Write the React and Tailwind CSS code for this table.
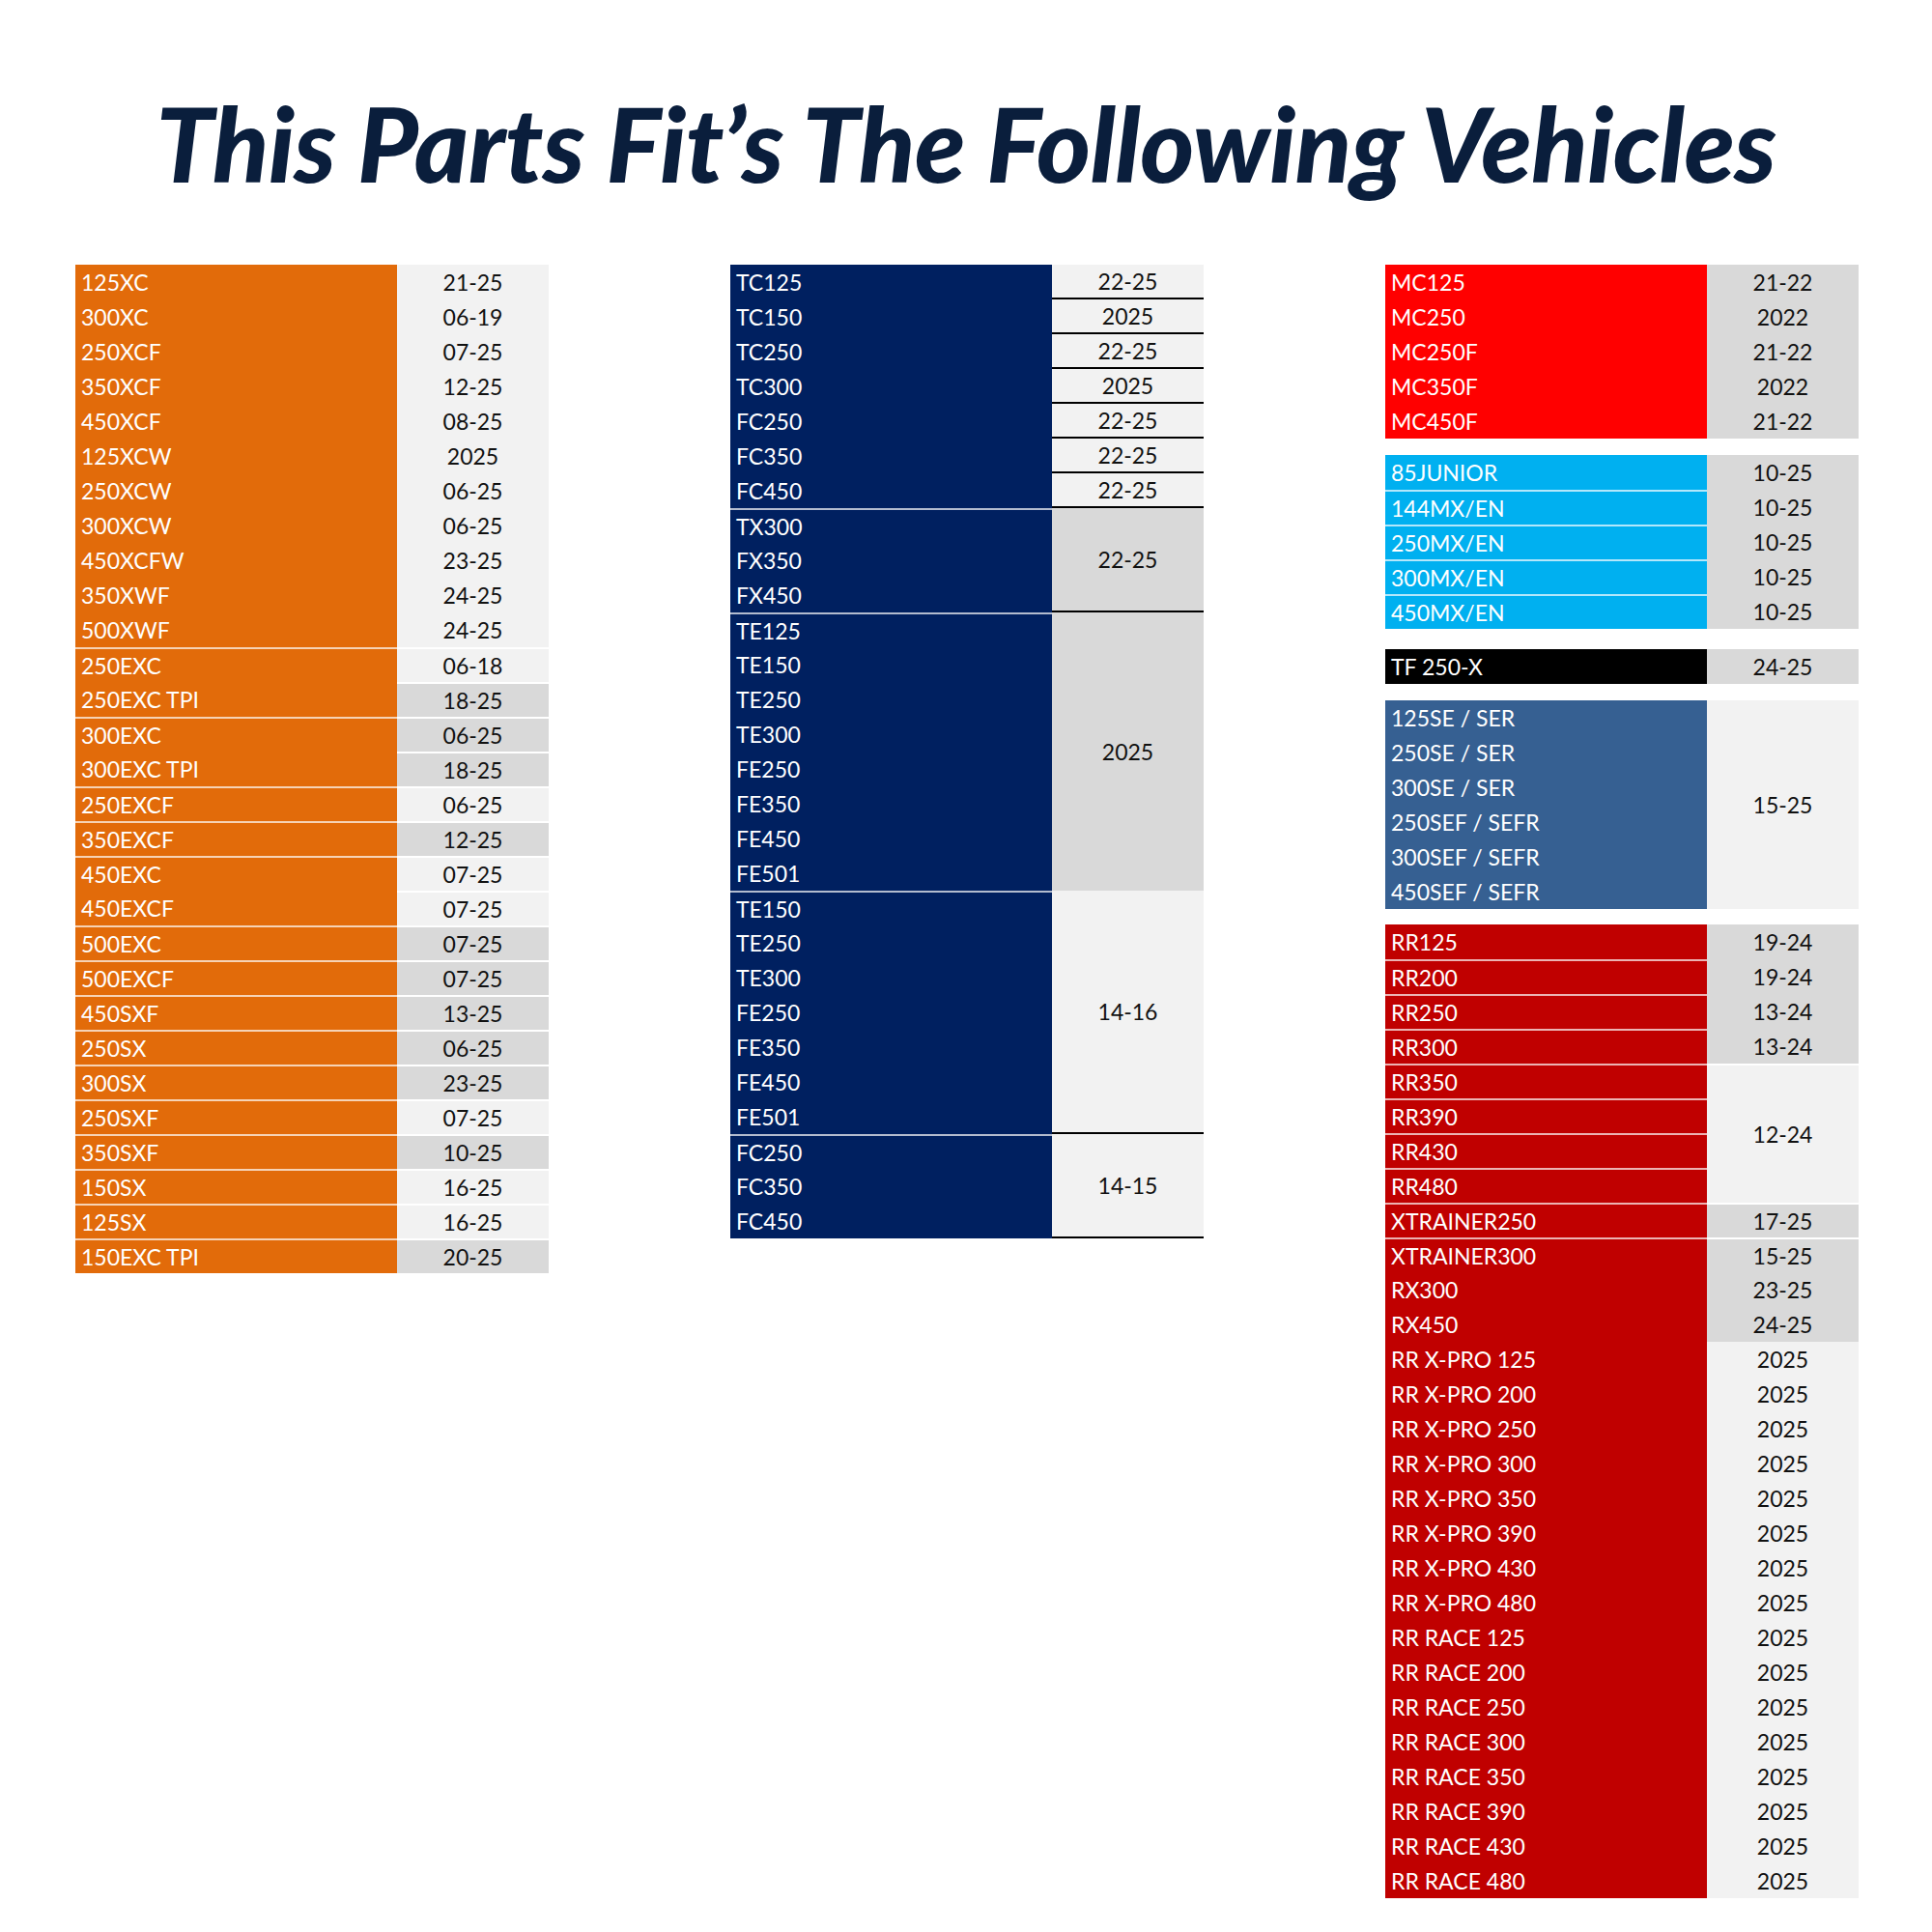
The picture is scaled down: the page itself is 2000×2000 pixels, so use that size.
import React from "react";
import clsx from "clsx";

const L = "bg-[#f2f2f2]";
const G = "bg-[#d9d9d9]";

function Group({ color, rows, dates, className }) {
  return (
    <div className={clsx("flex", className)}>
      <div className={clsx("w-[333px]", color)}>
        {rows.map((r, i) => (
          <div
            key={i}
            className={clsx(
              "h-9 flex items-center pl-[6px] text-white whitespace-nowrap",
              r.sep && "border-t-2 border-white/70"
            )}
          >
            {r.t}
          </div>
        ))}
      </div>
      <div className="w-[157px]">
        {dates.map((d, i) => (
          <div
            key={i}
            style={{ height: (d.span || 1) * 36 }}
            className={clsx(
              "flex items-center justify-center text-[#111]",
              d.bg,
              d.sep && "border-t-2 border-white",
              d.line && "border-b-2 border-black"
            )}
          >
            {d.t}
          </div>
        ))}
      </div>
    </div>
  );
}

const rows = (names, seps = []) => names.map((t, i) => ({ t, sep: seps.includes(i) }));

// left table
const leftNames = [
  "125XC", "300XC", "250XCF", "350XCF", "450XCF", "125XCW", "250XCW", "300XCW", "450XCFW", "350XWF", "500XWF",
  "250EXC", "250EXC TPI", "300EXC", "300EXC TPI", "250EXCF", "350EXCF", "450EXC", "450EXCF", "500EXC", "500EXCF",
  "450SXF", "250SX", "300SX", "250SXF", "350SXF", "150SX", "125SX", "150EXC TPI",
];
const leftSeps = [11, 13, 15, 16, 17, 19, 20, 21, 22, 23, 24, 25, 26, 27, 28];
const leftDates = [
  ["21-25", L], ["06-19", L], ["07-25", L], ["12-25", L], ["08-25", L], ["2025", L], ["06-25", L], ["06-25", L],
  ["23-25", L], ["24-25", L], ["24-25", L],
  ["06-18", L, 1], ["18-25", G, 1], ["06-25", G, 1], ["18-25", G, 1], ["06-25", L, 1], ["12-25", G, 1],
  ["07-25", L, 1], ["07-25", L, 1], ["07-25", G, 1], ["07-25", G, 1], ["13-25", G, 1], ["06-25", G, 1],
  ["23-25", G, 1], ["07-25", L, 1], ["10-25", G, 1], ["16-25", L, 1], ["16-25", L, 1], ["20-25", G, 1],
].map(([t, bg, sep]) => ({ t, bg, sep: !!sep }));

// middle table
const midNames = [
  "TC125", "TC150", "TC250", "TC300", "FC250", "FC350", "FC450",
  "TX300", "FX350", "FX450",
  "TE125", "TE150", "TE250", "TE300", "FE250", "FE350", "FE450", "FE501",
  "TE150", "TE250", "TE300", "FE250", "FE350", "FE450", "FE501",
  "FC250", "FC350", "FC450",
];
const midDates = [
  { t: "22-25", bg: L, line: true },
  { t: "2025", bg: L, line: true },
  { t: "22-25", bg: L, line: true },
  { t: "2025", bg: L, line: true },
  { t: "22-25", bg: L, line: true },
  { t: "22-25", bg: L, line: true },
  { t: "22-25", bg: L, line: true },
  { t: "22-25", bg: G, span: 3, line: true },
  { t: "2025", bg: G, span: 8 },
  { t: "14-16", bg: L, span: 7, line: true },
  { t: "14-15", bg: L, span: 3, line: true },
];

const xpro = [125, 200, 250, 300, 350, 390, 430, 480];

export default function App() {
  return (
    <div className="w-[2000px] h-[2000px] bg-white font-['Lato',sans-serif] text-[23px]">
      <h1 className="pt-[94px] text-center text-[107px] leading-none font-black italic tracking-[-0.004em] text-[#0a1e3c]">
        This Parts Fit’s The Following Vehicles
      </h1>

      <div className="flex items-start gap-[188px] pl-[78px] mt-[73px]">
        <Group color="bg-[#e26b0a]" rows={rows(leftNames, leftSeps)} dates={leftDates} />

        <Group color="bg-[#002060]" rows={rows(midNames, [7, 10, 18, 25])} dates={midDates} />

        <div className="flex flex-col">
          <Group
            color="bg-[#ff0000]"
            rows={rows(["MC125", "MC250", "MC250F", "MC350F", "MC450F"])}
            dates={["21-22", "2022", "21-22", "2022", "21-22"].map((t) => ({ t, bg: G }))}
          />
          <Group
            className="mt-[17px]"
            color="bg-[#00b0f0]"
            rows={rows(["85JUNIOR", "144MX/EN", "250MX/EN", "300MX/EN", "450MX/EN"], [1, 2, 3, 4])}
            dates={[{ t: "10-25", bg: G }, { t: "10-25", bg: G }, { t: "10-25", bg: G }, { t: "10-25", bg: G }, { t: "10-25", bg: G }]}
          />
          <Group
            className="mt-[21px]"
            color="bg-black"
            rows={rows(["TF 250-X"])}
            dates={[{ t: "24-25", bg: G }]}
          />
          <Group
            className="mt-[17px]"
            color="bg-[#366092]"
            rows={rows(["125SE / SER", "250SE / SER", "300SE / SER", "250SEF / SEFR", "300SEF / SEFR", "450SEF / SEFR"])}
            dates={[{ t: "15-25", bg: L, span: 6 }]}
          />
          <Group
            className="mt-[16px]"
            color="bg-[#c00000]"
            rows={rows(
              [
                "RR125", "RR200", "RR250", "RR300", "RR350", "RR390", "RR430", "RR480",
                "XTRAINER250", "XTRAINER300", "RX300", "RX450",
                ...xpro.map((n) => `RR X-PRO ${n}`),
                ...xpro.map((n) => `RR RACE ${n}`),
              ],
              [1, 2, 3, 4, 5, 6, 7, 8, 9]
            )}
            dates={[
              { t: "19-24", bg: G },
              { t: "19-24", bg: G },
              { t: "13-24", bg: G },
              { t: "13-24", bg: G },
              { t: "12-24", bg: L, span: 4, sep: true },
              { t: "17-25", bg: G, sep: true },
              { t: "15-25", bg: G, sep: true },
              { t: "23-25", bg: G },
              { t: "24-25", bg: G },
              ...Array.from({ length: 16 }, () => ({ t: "2025", bg: L })),
            ]}
          />
        </div>
      </div>
    </div>
  );
}
